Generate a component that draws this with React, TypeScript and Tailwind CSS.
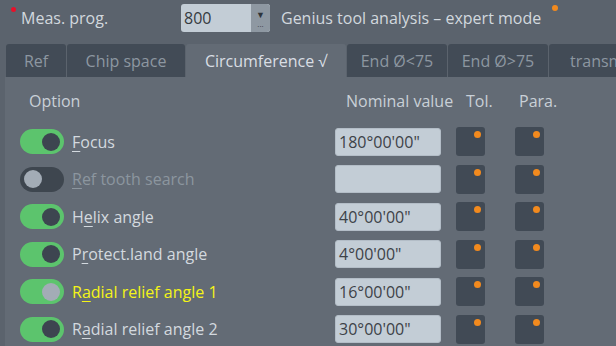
import React from "react";

const font = { fontFamily: '"Open Sans", "Noto Sans", sans-serif' };

function Toggle({ on, knob }: { on: boolean; knob?: "dark" | "light" }) {
  const k = knob ?? (on ? "dark" : "light");
  return (
    <div
      className={`relative w-[44px] h-[25px] rounded-full shrink-0 ${on ? "bg-[#5cc46d]" : "bg-[#3e464f]"}`}
    >
      <div
        className={`absolute top-[3.5px] w-[18px] h-[18px] rounded-full ${on ? "right-[4px]" : "left-[4px]"} ${k === "dark" ? "bg-[#3d4550]" : "bg-[#a3acb6]"}`}
      />
    </div>
  );
}

function DotBox() {
  return (
    <div className="relative w-[29px] h-[29px] rounded-[3px] bg-[#414a55]">
      <div className="absolute top-[4px] right-[4px] w-[7px] h-[7px] rounded-full bg-[#f28a1e]" />
    </div>
  );
}

type Row = {
  pre: string;
  u: string;
  post: string;
  on: boolean;
  knob?: "dark" | "light";
  value: string;
  color: string;
};

const rows: Row[] = [
  { pre: "", u: "F", post: "ocus", on: true, value: "180°00'00\"", color: "text-[#d3d9df]" },
  { pre: "", u: "R", post: "ef tooth search", on: false, value: "", color: "text-[#8c969f]" },
  { pre: "H", u: "e", post: "lix angle", on: true, value: "40°00'00\"", color: "text-[#d3d9df]" },
  { pre: "P", u: "r", post: "otect.land angle", on: true, value: "4°00'00\"", color: "text-[#d3d9df]" },
  { pre: "R", u: "a", post: "dial relief angle 1", on: true, knob: "light", value: "16°00'00\"", color: "text-[#f4f417]" },
  { pre: "R", u: "a", post: "dial relief angle 2", on: true, value: "30°00'00\"", color: "text-[#d3d9df]" },
];

const tabs = [
  { label: "Ref", w: "w-[60px]", active: false },
  { label: "Chip space", w: "w-[118px]", active: false },
  { label: "Circumference √", w: "w-[160px]", active: true },
  { label: "End Ø<75", w: "w-[100px]", active: false },
  { label: "End Ø>75", w: "w-[100px]", active: false },
  { label: "transm", w: "w-[110px]", active: false },
];

export default function App() {
  return (
    <div
      className="w-[616px] h-[346px] overflow-hidden bg-[#5b636d] text-[16px]"
      style={font}
    >
      {/* top bar */}
      <div className="h-[35px] flex items-center relative">
        <div className="absolute left-[11px] top-[7px] w-[5px] h-[5px] rounded-full bg-[#e8102a]" />
        <div className="ml-[21px] w-[160px] text-[#d2d8de] leading-none">Meas. prog.</div>
        <div className="flex w-[89px] h-[28px] rounded-[3px] bg-[#c3cdd6] overflow-hidden">
          <div className="flex-1 flex items-center pl-[3px] text-[#363b41] leading-none">800</div>
          <div className="w-[19px] h-full bg-[#8e98a2] flex flex-col items-center justify-center rounded-r-[3px]">
            <div className="text-[9px] leading-none text-[#2e343a] mt-[2px]">▼</div>
            <div className="text-[8px] leading-none text-[#3b4148] mt-[1px]">...</div>
          </div>
        </div>
        <div className="ml-[11px] text-[#d2d8de] leading-none relative">
          Genius tool analysis – expert mode
          <div className="absolute -right-[17px] -top-[5px] w-[6px] h-[6px] rounded-full bg-[#f28a1e]" />
        </div>
      </div>

      {/* tabs */}
      <div className="mt-[9px] h-[33px] flex pl-[6px] gap-[1px]">
        {tabs.map((t) => (
          <div
            key={t.label}
            className={`${t.w} shrink-0 h-full flex items-center rounded-t-[3px] whitespace-nowrap leading-none ${t.active ? "bg-[#636b75] text-[#d9dee4]" : "bg-[#424b56] text-[#8d97a1]"} ${t.label === "transm" ? "justify-start pl-[21px]" : "justify-center"}`}
          >
            {t.label}
          </div>
        ))}
      </div>

      {/* panel */}
      <div className="ml-[5px] h-[269px] bg-[#636b75] pt-[11px]">
        <div className="h-[26px] flex items-center text-[#c9d0d7] leading-none">
          <div className="ml-[24px] w-[317px]">Option</div>
          <div className="w-[120px]">Nominal value</div>
          <div className="w-[53px]">Tol.</div>
          <div>Para.</div>
        </div>
        <div className="mt-[9px]">
          {rows.map((r, i) => (
            <div key={i} className="h-[37.5px] flex items-center">
              <div className="ml-[15px]">
                <Toggle on={r.on} knob={r.knob} />
              </div>
              <div className={`ml-[8px] w-[263px] leading-none ${r.color}`}>
                {r.pre}
                <span className="underline underline-offset-[3px] decoration-1">{r.u}</span>
                {r.post}
              </div>
              <div className="w-[106px] h-[28px] rounded-[3px] bg-[#c3cdd6] border border-[#b3bdc7] flex items-center pl-[3px] text-[#3d4248] leading-none">
                {r.value}
              </div>
              <div className="ml-[15px]">
                <DotBox />
              </div>
              <div className="ml-[30px]">
                <DotBox />
              </div>
            </div>
          ))}
        </div>
      </div>
    </div>
  );
}
